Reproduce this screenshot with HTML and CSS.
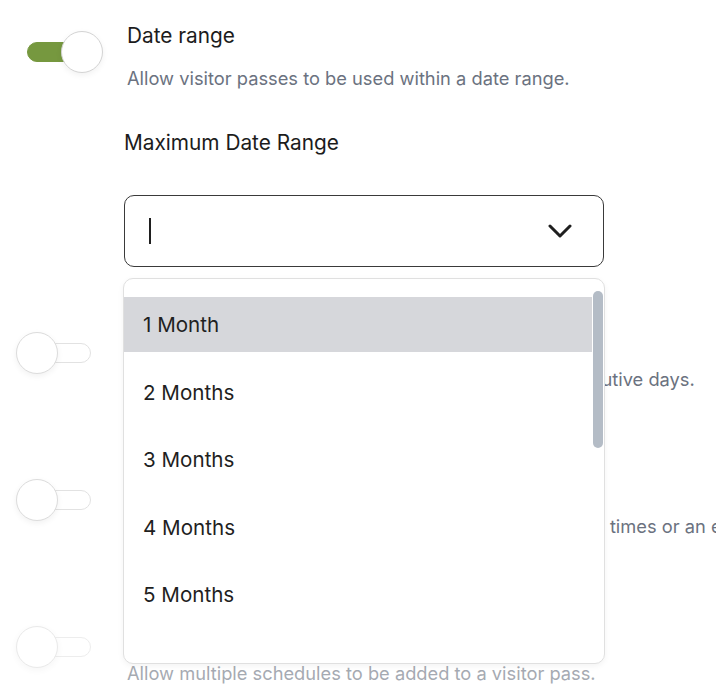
FILE: index.html
```html
<!DOCTYPE html>
<html lang="en">
<head>
    <meta charset="UTF-8">
    <meta name="viewport" content="width=device-width, initial-scale=1.0">
    <title>Visitor Pass Settings</title>
    <link rel="stylesheet" href="styles.css">
</head>
<body>
    <div class="settings">
        <div class="setting">
            <span class="toggle on"><span class="knob"></span></span>
            <div class="setting-body">
                <div class="setting-title">Date range</div>
                <div class="setting-desc">Allow visitor passes to be used within a date range.</div>
                <div class="range-field">
                    <label class="field-label">Maximum Date Range</label>
                    <div class="select">
                        <span class="caret"></span>
                        <svg class="chevron" width="24" height="16" viewBox="0 0 24 16">
                            <path d="M2 3 L12 13 L22 3" fill="none" stroke="#1f1f1f" stroke-width="3" stroke-linecap="round" stroke-linejoin="round"/>
                        </svg>
                    </div>
                    <div class="menu">
                        <ul class="options">
                            <li class="active">1 Month</li>
                            <li>2 Months</li>
                            <li>3 Months</li>
                            <li>4 Months</li>
                            <li>5 Months</li>
                        </ul>
                        <span class="thumb"></span>
                    </div>
                </div>
            </div>
        </div>
        <div class="setting">
            <span class="toggle"><span class="knob"></span></span>
            <div class="setting-body">
                <div class="setting-title">Consecutive days</div>
                <div class="setting-desc">Allow visitor passes to be used for a number of consecutive days.</div>
            </div>
        </div>
        <div class="setting">
            <span class="toggle"><span class="knob"></span></span>
            <div class="setting-body">
                <div class="setting-title">Recurring times</div>
                <div class="setting-desc">Allow visitor passes to be used on recurring days at set times or an entire day.</div>
            </div>
        </div>
        <div class="setting faded">
            <span class="toggle"><span class="knob"></span></span>
            <div class="setting-body">
                <div class="setting-title">Multiple schedules</div>
                <div class="setting-desc">Allow multiple schedules to be added to a visitor pass.</div>
            </div>
        </div>
    </div>
</body>
</html>
```

FILE: styles.css
```css
body {
    margin: 0;
    font-family: Inter, 'Noto Sans', sans-serif;
    background-color: white;
    color: #1c1c1c;
    overflow: hidden;
}
.settings {
    padding: 24px 0 0 27px;
}
.setting {
    display: flex;
    gap: 36px;
    padding-bottom: 58px;
    white-space: nowrap;
}
.toggle {
    position: relative;
    flex: none;
    width: 62px;
    height: 18px;
    margin-top: 18px;
    border: 1px solid #e2e2e2;
    border-radius: 10px;
    background-color: white;
}
.toggle.on {
    background-color: #76983f;
    border-color: #76983f;
}
.knob {
    position: absolute;
    top: -12px;
    left: -12px;
    width: 40px;
    height: 40px;
    border: 1px solid #dcdcdc;
    border-radius: 50%;
    background-color: white;
    box-shadow: 0 2px 6px rgba(0, 0, 0, 0.06);
}
.toggle.on .knob {
    left: auto;
    right: -13px;
    border-color: #d4d4d4;
}
.setting-body {
    flex: 1;
    min-width: 0;
}
.setting-title {
    font-size: 20.8px;
    line-height: 24px;
    height: 24px;
}
.setting-desc {
    margin-top: 19px;
    padding-bottom: 24px;
    font-size: 18.3px;
    line-height: 22px;
    color: #6b7280;
}
.faded {
    opacity: 0.6;
}
.range-field {
    position: relative;
    width: 480px;
    margin-left: -3px;
}
.field-label {
    display: block;
    margin-top: 18px;
    font-size: 20.8px;
    line-height: 24px;
}
.select {
    display: flex;
    align-items: center;
    justify-content: space-between;
    height: 70px;
    margin-top: 40px;
    padding: 0 31px 0 24px;
    border: 1px solid #3a3a3a;
    border-radius: 10px;
}
.caret {
    width: 2px;
    height: 26px;
    background-color: #1f1f1f;
}
.menu {
    position: absolute;
    z-index: 2;
    top: calc(100% + 11px);
    left: -1px;
    width: 480px;
    height: 384px;
    overflow: hidden;
    border: 1px solid #e0e0e0;
    border-radius: 10px;
    background-color: white;
    box-shadow: 0 2px 6px rgba(0, 0, 0, 0.05);
}
.options {
    list-style: none;
    margin: 0;
    padding: 18px 12px 0 0;
}
.options li {
    height: 55px;
    margin-bottom: 12.5px;
    padding-left: 19px;
    font-size: 20.6px;
    line-height: 55px;
    color: #1f1f1f;
}
.options li.active {
    background-color: #d6d7db;
}
.thumb {
    position: absolute;
    top: 12px;
    right: 1px;
    width: 10px;
    height: 157px;
    border-radius: 5px;
    background-color: #b4bcc6;
}
```
